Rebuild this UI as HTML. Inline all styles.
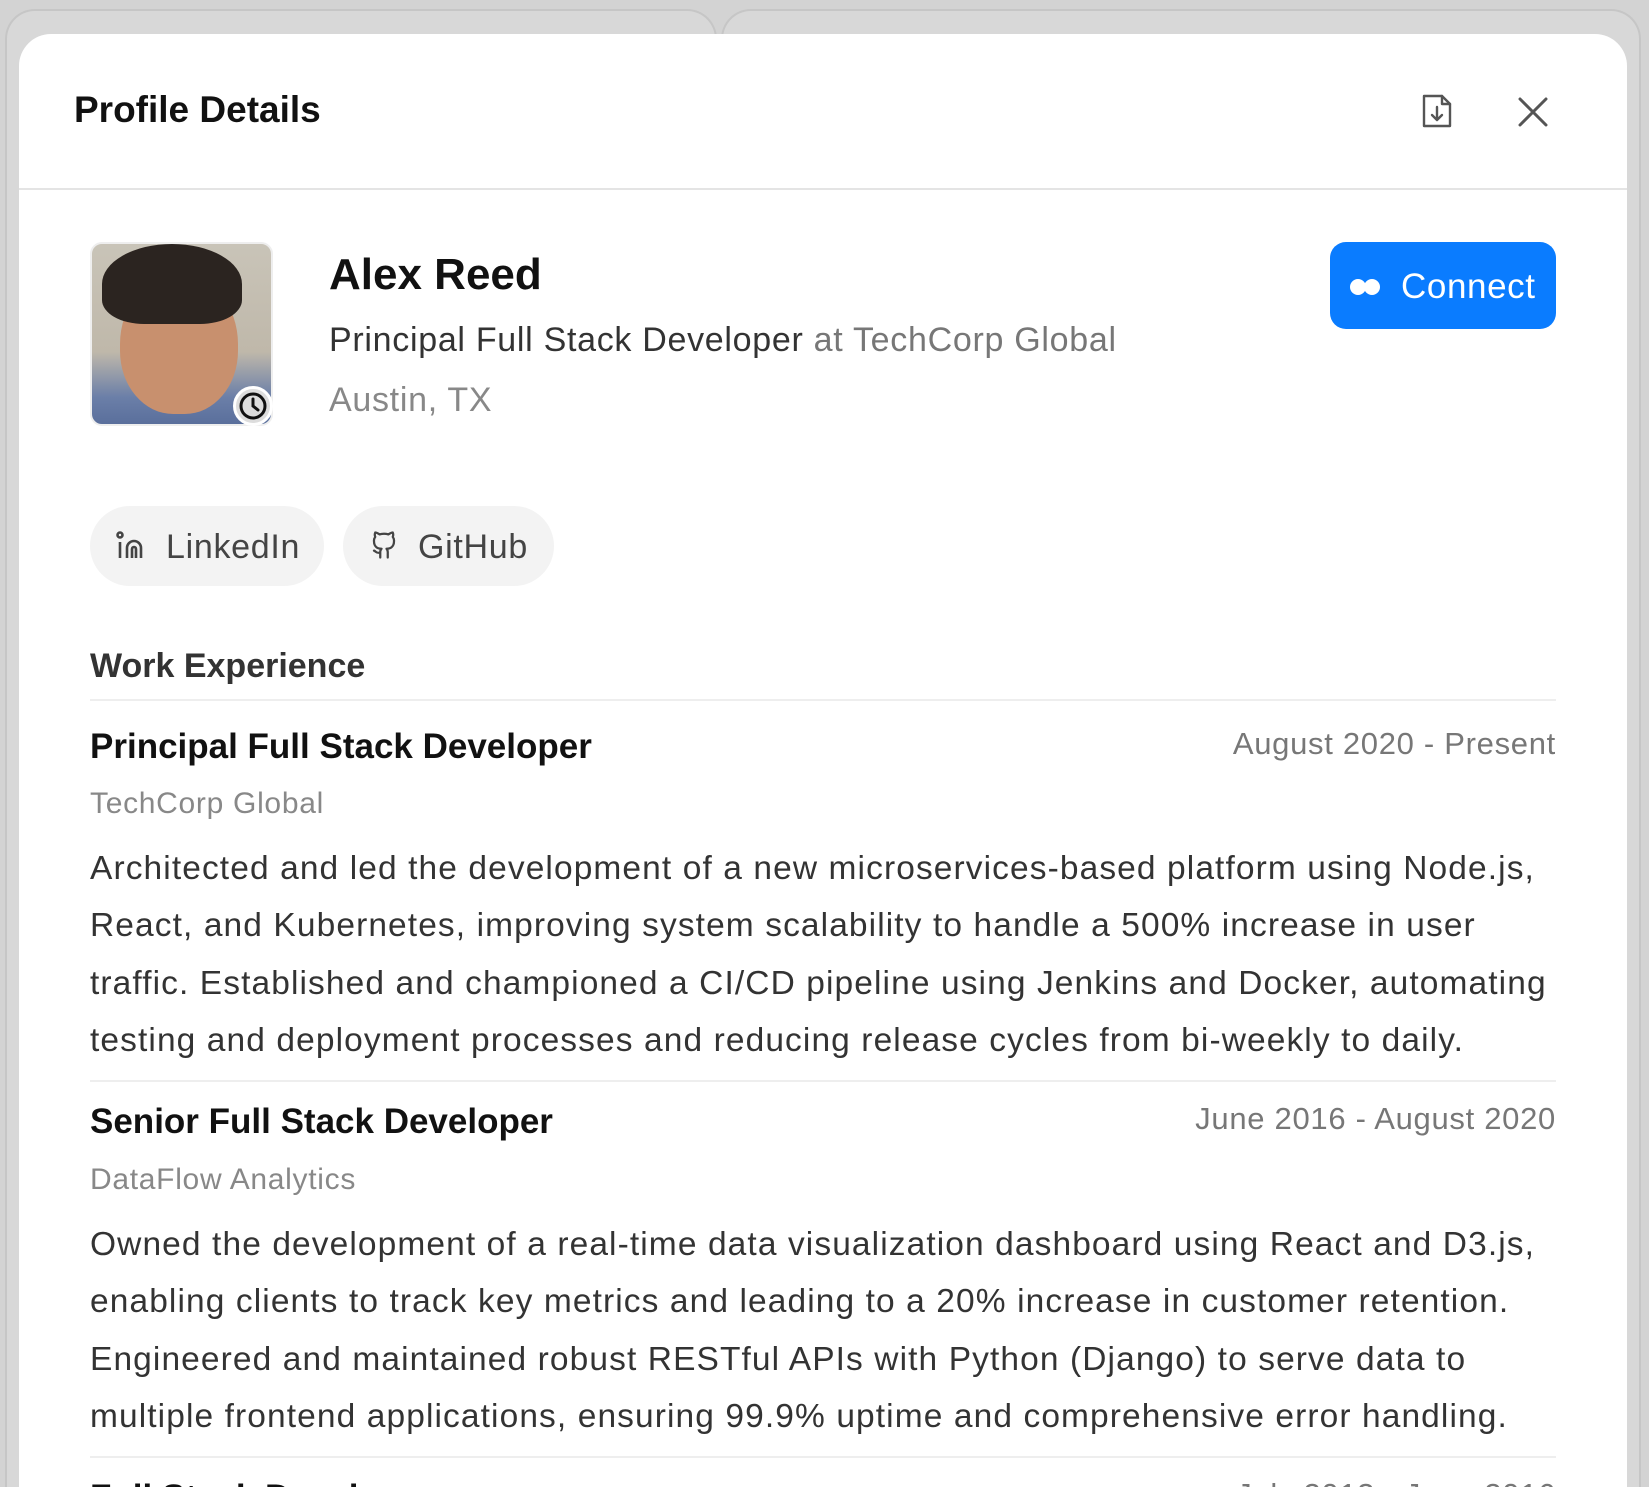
<!DOCTYPE html>
<html style="width:1649px;height:1487px;overflow:hidden"><head><meta charset="utf-8"><style>
*{margin:0;padding:0;box-sizing:border-box}
body{width:1649px;height:1487px;background:#d3d3d3;font-family:"Liberation Sans",sans-serif;position:relative;overflow:hidden}
.abs{position:absolute;white-space:nowrap}
.back{position:absolute;background:#d8d8d8;border:2px solid #c6c6c6;border-radius:30px}
.modal{position:absolute;left:19px;top:34px;width:1608px;height:1453px;background:#fff;border-radius:32px 32px 0 0;overflow:hidden}
.pill{position:absolute;background:#f3f3f3;border-radius:40px;color:#444;font-size:34px}
.p{position:absolute;left:71px;color:#333;font-size:33.5px;line-height:57.3px;white-space:nowrap;letter-spacing:1.1px}
.sep{position:absolute;left:71px;width:1466px;height:2px;background:#eee}
.ls{letter-spacing:0.7px}
</style></head><body>
<div class="back" style="left:5px;top:9px;width:712px;height:1478px;border-bottom:none;border-radius:30px 30px 0 0"></div>
<div class="back" style="left:721px;top:9px;width:920px;height:1478px;border-bottom:none;border-radius:30px 30px 0 0"></div>
<div class="modal">
  <div class="abs" style="left:55px;top:55px;font-size:37px;font-weight:700;color:#111">Profile Details</div>
  <svg class="abs" style="left:1401px;top:58px" width="34" height="38" viewBox="0 0 34 38" fill="none" stroke="#555" stroke-width="2.4" stroke-linecap="round" stroke-linejoin="round"><path d="M4 4h18l8 8v22H4z"/><path d="M22 4v8h8"/><path d="M17 15v13M12 23l5 5 5-5"/></svg>
  <svg class="abs" style="left:1499px;top:63px" width="30" height="30" viewBox="0 0 30 30" stroke="#555" stroke-width="3" stroke-linecap="round"><path d="M2 2l26 26M28 2L2 28"/></svg>
  <div class="abs" style="left:0;top:154px;width:1608px;height:2px;background:#e4e4e4"></div>
  <div class="abs" style="left:71px;top:208px;width:183px;height:184px;border-radius:12px;overflow:hidden;background:linear-gradient(180deg,#c9c4b8 0%,#bfb8aa 60%,#6b7fa8 85%,#5a6f9c 100%);border:2px solid #eee">
    <div style="position:absolute;left:28px;top:30px;width:118px;height:140px;border-radius:50% 50% 45% 45%;background:#c8906e"></div>
    <div style="position:absolute;left:10px;top:0px;width:140px;height:80px;border-radius:50% 50% 30% 30%;background:#2b2420"></div>
  </div>
  <div class="abs" style="left:214px;top:352px;width:40px;height:40px;border-radius:50%;background:#ddd;border:3px solid #fff"></div>
  <svg class="abs" style="left:218px;top:356px" width="32" height="32" viewBox="0 0 32 32" fill="none" stroke="#111" stroke-width="3"><circle cx="16" cy="16" r="12"/><path d="M16 9v7l5 4" stroke-linecap="round"/></svg>
  <div class="abs" style="left:310px;top:216px;font-size:44px;font-weight:700;color:#111">Alex Reed</div>
  <div class="abs ls" style="left:310px;top:287px;font-size:34px;color:#333">Principal Full Stack Developer <span style="color:#777">at TechCorp Global</span></div>
  <div class="abs ls" style="left:310px;top:347px;font-size:34px;color:#888">Austin, TX</div>
  <div class="abs" style="left:1311px;top:208px;width:226px;height:87px;background:#0a7cff;border-radius:16px"></div>
  <div class="abs" style="left:1331px;top:245px;width:16px;height:16px;border-radius:50%;background:#fff"></div>
  <div class="abs" style="left:1345px;top:245px;width:16px;height:16px;border-radius:50%;background:#fff"></div>
  <div class="abs" style="left:1382px;top:233px;font-size:35px;color:#fff;letter-spacing:0.6px">Connect</div>
  <div class="pill" style="left:71px;top:472px;width:234px;height:80px"></div>
  <svg class="abs" style="left:97px;top:497px" width="32" height="30" viewBox="0 0 32 30" fill="none" stroke="#444" stroke-width="2.6"><circle cx="4" cy="4" r="2.5"/><path d="M4 11v16M11 27V17a7 7 0 0 1 14 0v10M16 27v-9a2 2 0 0 1 4 0v9"/></svg>
  <div class="abs ls" style="left:147px;top:494px;font-size:34px;color:#444">LinkedIn</div>
  <div class="pill" style="left:324px;top:472px;width:211px;height:80px"></div>
  <svg class="abs" style="left:350px;top:496px" width="30" height="30" viewBox="0 0 24 24" fill="none" stroke="#444" stroke-width="1.8" stroke-linecap="round" stroke-linejoin="round"><path d="M9 22v-4a4 4 0 0 1 1-3c-3 0-6-1.5-6-6a5 5 0 0 1 1-3.5 4.5 4.5 0 0 1 0-3.5s1 0 3.5 1.5a12 12 0 0 1 7 0C18 2 19 2 19 2a4.5 4.5 0 0 1 0 3.5A5 5 0 0 1 20 9c0 4.5-3 6-6 6a4 4 0 0 1 1 3v4M9 18c-3 1-3.5-1-5-1.5"/></svg>
  <div class="abs ls" style="left:399px;top:494px;font-size:34px;color:#444">GitHub</div>
  <div class="abs" style="left:71px;top:613px;font-size:34px;font-weight:700;color:#333">Work Experience</div>
  <div class="sep" style="top:665px"></div>
  <div class="abs" style="left:71px;top:693px;font-size:35px;font-weight:700;color:#111">Principal Full Stack Developer</div>
  <div class="abs ls" style="right:71px;top:692px;font-size:31px;color:#777">August 2020 - Present</div>
  <div class="abs ls" style="left:71px;top:753px;font-size:30px;color:#888">TechCorp Global</div>
  <div class="p" style="top:806px">Architected and led the development of a new microservices-based platform using Node.js,<br>React, and Kubernetes, improving system scalability to handle a 500% increase in user<br>traffic. Established and championed a CI/CD pipeline using Jenkins and Docker, automating<br>testing and deployment processes and reducing release cycles from bi-weekly to daily.</div>
  <div class="sep" style="top:1046px"></div>
  <div class="abs" style="left:71px;top:1068px;font-size:35px;font-weight:700;color:#111">Senior Full Stack Developer</div>
  <div class="abs ls" style="right:71px;top:1067px;font-size:31px;color:#777">June 2016 - August 2020</div>
  <div class="abs ls" style="left:71px;top:1129px;font-size:30px;color:#888">DataFlow Analytics</div>
  <div class="p" style="top:1182px">Owned the development of a real-time data visualization dashboard using React and D3.js,<br>enabling clients to track key metrics and leading to a 20% increase in customer retention.<br>Engineered and maintained robust RESTful APIs with Python (Django) to serve data to<br>multiple frontend applications, ensuring 99.9% uptime and comprehensive error handling.</div>
  <div class="sep" style="top:1422px"></div>
  <div class="abs" style="left:71px;top:1444px;font-size:35px;font-weight:700;color:#111;height:9px;overflow:hidden">Full Stack Developer</div>
  <div class="abs ls" style="right:71px;top:1443px;font-size:31px;color:#777;height:10px;overflow:hidden">July 2013 - June 2016</div>
</div>
</body></html>
